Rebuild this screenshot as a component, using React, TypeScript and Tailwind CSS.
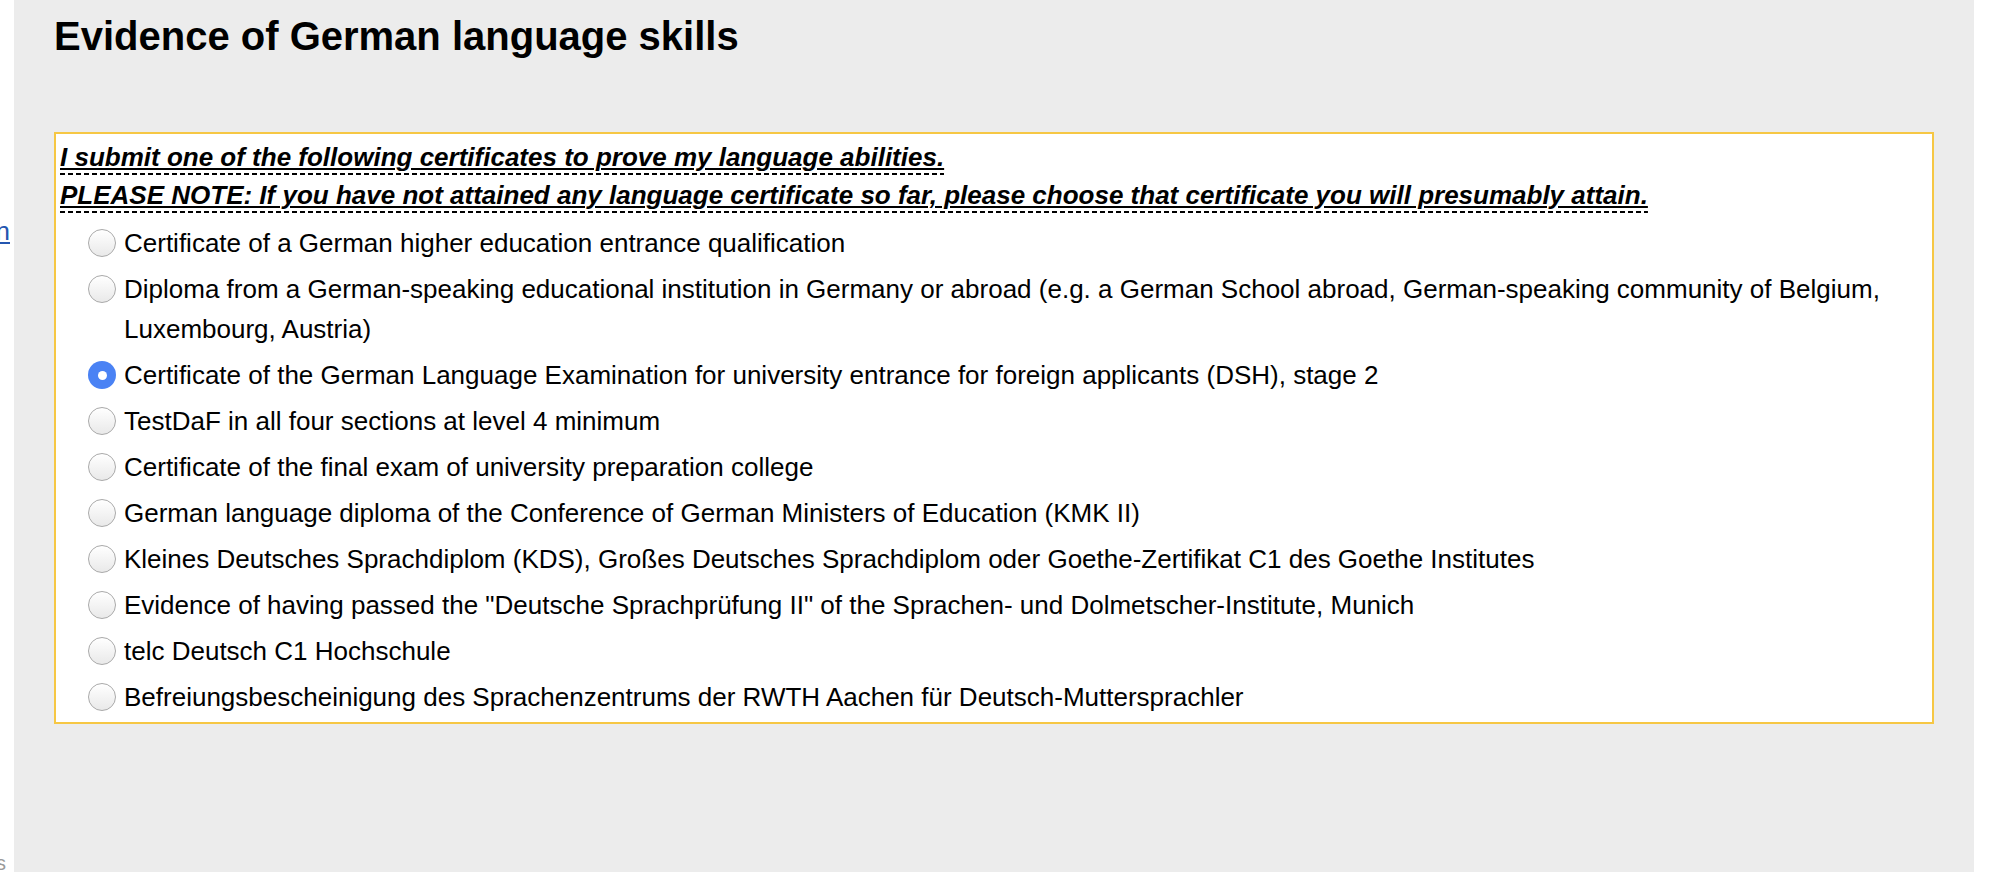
import React, { useState } from 'react';

const OPTIONS = [
  'Certificate of a German higher education entrance qualification',
  'Diploma from a German-speaking educational institution in Germany or abroad (e.g. a German School abroad, German-speaking community of Belgium, Luxembourg, Austria)',
  'Certificate of the German Language Examination for university entrance for foreign applicants (DSH), stage 2',
  'TestDaF in all four sections at level 4 minimum',
  'Certificate of the final exam of university preparation college',
  'German language diploma of the Conference of German Ministers of Education (KMK II)',
  'Kleines Deutsches Sprachdiplom (KDS), Großes Deutsches Sprachdiplom oder Goethe-Zertifikat C1 des Goethe Institutes',
  'Evidence of having passed the "Deutsche Sprachprüfung II" of the Sprachen- und Dolmetscher-Institute, Munich',
  'telc Deutsch C1 Hochschule',
  'Befreiungsbescheinigung des Sprachenzentrums der RWTH Aachen für Deutsch-Muttersprachler',
];

const dashed =
  'underline decoration-[1.5px] underline-offset-[2px] bg-[repeating-linear-gradient(90deg,#000_0_5px,transparent_5px_8px)] bg-[length:100%_2px] bg-bottom bg-no-repeat pb-[3px]';

const RadioDot: React.FC<{ checked: boolean }> = ({ checked }) =>
  checked ? (
    <span className="mt-[6px] flex h-[28px] w-[28px] shrink-0 items-center justify-center rounded-full bg-[#4a82f4]">
      <span className="h-[9px] w-[9px] rounded-full bg-white" />
    </span>
  ) : (
    <span className="mt-[6px] h-[28px] w-[28px] shrink-0 rounded-full border border-[#a9a9a9] bg-gradient-to-b from-white to-[#e9e9e9] shadow-[inset_0_1px_1px_rgba(255,255,255,0.9)]" />
  );

export default function App() {
  const [selected, setSelected] = useState(2);

  return (
    <div className="flex h-[872px] overflow-hidden bg-white font-['Liberation_Sans',Arial,sans-serif] text-black">
      <aside className="flex w-[14px] shrink-0 flex-col overflow-hidden">
        <div className="mt-[212px] flex justify-end pr-[4px]">
          <a href="#" className="shrink-0 whitespace-nowrap text-[26px] text-[#2456b0] underline">
            Application
          </a>
        </div>
        <div className="mt-auto mb-[-6px] flex justify-end pr-[8px]">
          <span className="shrink-0 whitespace-nowrap text-[20px] text-[#9a9a9a]">Contacts</span>
        </div>
      </aside>

      <main className="flex-1 bg-[#ececec] px-[40px] pt-[14px]">
        <h1 className="text-[40px] font-bold leading-[45px]">Evidence of German language skills</h1>

        <section className="mt-[73px] border-2 border-[#f6c744] bg-white pt-[4px] pb-[5px] pl-[4px] pr-[6px]">
          <div className="text-[26px] font-bold italic leading-[38px]">
            <p>
              <span className={dashed}>I submit one of the following certificates to prove my language abilities.</span>
            </p>
            <p>
              <span className={dashed}>
                PLEASE NOTE: If you have not attained any language certificate so far, please choose that certificate
                you will presumably attain.
              </span>
            </p>
          </div>

          <div role="radiogroup" className="mt-[9px] flex flex-col gap-[6px] pl-[28px] text-[26px] leading-[40px]">
            {OPTIONS.map((label, i) => (
              <label
                key={i}
                role="radio"
                aria-checked={selected === i}
                onClick={() => setSelected(i)}
                className="flex cursor-pointer items-start gap-[8px]"
              >
                <RadioDot checked={selected === i} />
                <span className="flex-1">{label}</span>
              </label>
            ))}
          </div>
        </section>
      </main>

      <div className="w-[24px] shrink-0 bg-white" />
    </div>
  );
}
